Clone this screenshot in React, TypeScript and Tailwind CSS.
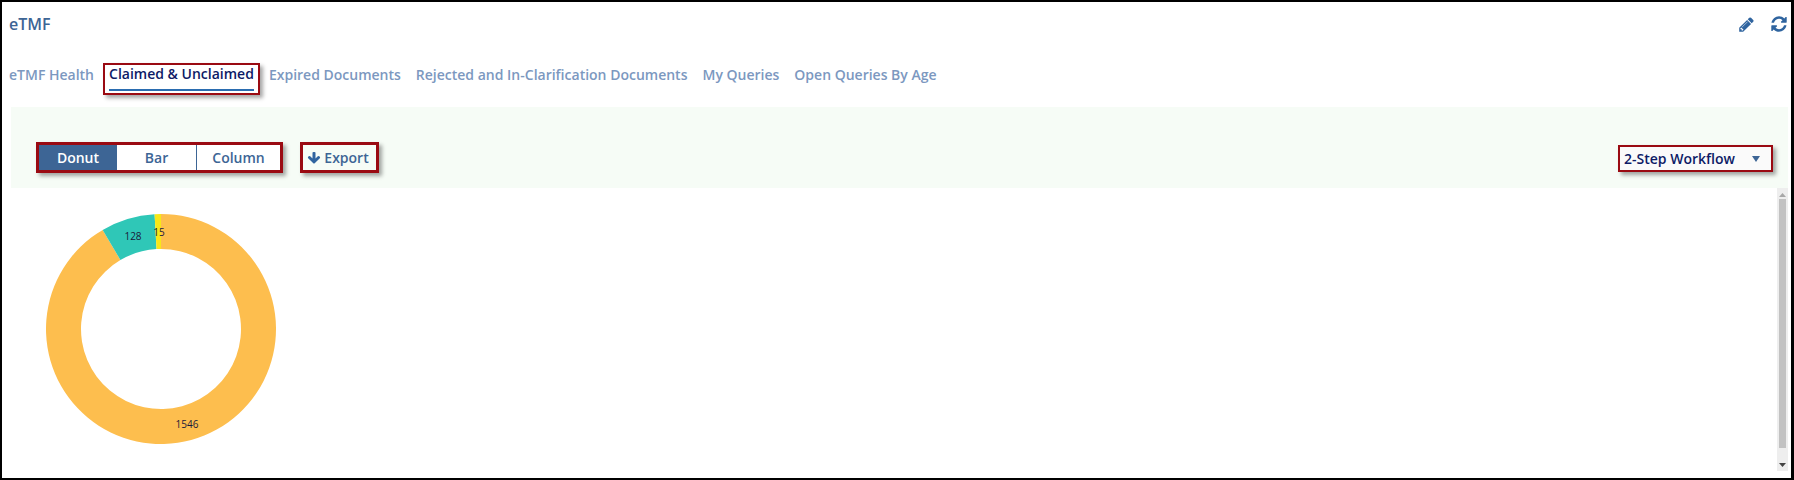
const tabs = [
  "eTMF Health",
  "Claimed & Unclaimed",
  "Expired Documents",
  "Rejected and In-Clarification Documents",
  "My Queries",
  "Open Queries By Age",
];

const slices = [
  { value: 1546, color: "#fdbe4e" },
  { value: 128, color: "#2fc7b7" },
  { value: 15, color: "#f7e718" },
];

// builds an svg ring segment, angles in degrees from 12 o'clock
function ringPath(cx: number, cy: number, r: number, inner: number, from: number, to: number) {
  const pt = (rad: number, deg: number) => {
    const a = (deg * Math.PI) / 180;
    return `${cx + rad * Math.sin(a)} ${cy - rad * Math.cos(a)}`;
  };
  const large = to - from > 180 ? 1 : 0;
  return `M${pt(r, from)} A${r} ${r} 0 ${large} 1 ${pt(r, to)} L${pt(inner, to)} A${inner} ${inner} 0 ${large} 0 ${pt(inner, from)} Z`;
}

function PencilIcon() {
  return (
    <svg width="17" height="17" viewBox="0 0 1792 1792" fill="#2f649f">
      <path d="M491 1536l91-91-235-235-91 91v107h128v128h107zm523-928q0-22-22-22-10 0-17 7l-542 542q-7 7-7 17 0 22 22 22 10 0 17-7l542-542q7-7 7-17zm-54-192l416 416-832 832h-416v-416zm683 96q0 53-37 90l-166 166-416-416 166-165q36-38 90-38 53 0 91 38l235 234q37 39 37 91z" />
    </svg>
  );
}

function RefreshIcon() {
  return (
    <svg width="18" height="18" viewBox="0 0 1792 1792" fill="#2f649f">
      <path d="M1639 1056q0 5-1 7-64 268-268 434.5t-478 166.5q-146 0-282.5-55t-243.5-157l-129 129q-19 19-45 19t-45-19-19-45v-448q0-26 19-45t45-19h448q26 0 45 19t19 45-19 45l-137 137q71 66 161 102t187 36q134 0 250-65t186-179q11-17 53-117 8-23 30-23h192q13 0 22.5 9.5t9.5 22.5zm25-800v448q0 26-19 45t-45 19h-448q-26 0-45-19t-19-45 19-45l138-138q-148-137-349-137-134 0-250 65t-186 179q-11 17-53 117-8 23-30 23h-199q-13 0-22.5-9.5t-9.5-22.5v-7q65-268 270-434.5t480-166.5q146 0 284 55.5t245 156.5l130-129q19-19 45-19t45 19 19 45z" />
    </svg>
  );
}

function ArrowDownIcon() {
  return (
    <svg width="14" height="14" viewBox="0 0 1792 1792" fill="#2f649f">
      <path d="M1675 832q0 53-37 90l-651 652q-39 37-91 37-53 0-90-37l-651-652q-38-36-38-90 0-53 38-91l74-75q39-37 91-37 53 0 90 37l294 294v-704q0-52 38-90t90-38h128q52 0 90 38t38 90v704l294-294q37-37 90-37 52 0 91 37l75 75q37 39 37 91z" />
    </svg>
  );
}

function Donut() {
  const total = slices.reduce((sum, s) => sum + s.value, 0);
  let angle = 0;
  return (
    <svg width="240" height="240" viewBox="0 0 240 240" className="block">
      {slices.map((s) => {
        const from = angle;
        angle += (s.value / total) * 360;
        return <path key={s.value} d={ringPath(120, 120, 115, 80, from, angle)} fill={s.color} />;
      })}
      <g fontSize="10" fill="#1a1a3a" textAnchor="middle">
        <text x="146" y="219">1546</text>
        <text x="92" y="31">128</text>
        <text x="118" y="27">15</text>
      </g>
    </svg>
  );
}

export default function App() {
  return (
    <div className="w-[1794px] h-[480px] bg-white border-2 border-r-[3px] border-black font-['Open_Sans',sans-serif] flex flex-col overflow-hidden">
      <div className="flex items-center justify-between h-[44px] pl-[7px] pr-[3px]">
        <span className="text-[16px] font-semibold text-[#3d6595]">eTMF</span>
        <div className="flex items-center gap-[15px]">
          <PencilIcon />
          <RefreshIcon />
        </div>
      </div>

      <div className="flex items-start h-[61px] pt-[17px] pl-[7px] gap-[15px]">
        {tabs.map((tab, i) =>
          i === 1 ? (
            <div
              key={tab}
              className="h-[32px] px-[4px] -ml-[6px] -mr-[6px] border-[2px] border-[#9a0a12] shadow-[3px_3px_4px_rgba(0,0,0,0.35)] text-[14px] font-semibold text-[#0d1a66]"
            >
              <div className="border-b-[2px] border-[#2a6cb0] h-[26px] leading-[18px]">{tab}</div>
            </div>
          ) : (
            <span key={tab} className="mt-[2px] text-[14px] leading-[20px] font-semibold text-[#7c98bf]">
              {tab}
            </span>
          ),
        )}
      </div>

      <div className="flex items-start justify-between h-[81px] ml-[9px] mr-[3px] bg-[#f6fcf6] pt-[35px] pl-[25px] pr-[15px]">
        <div className="flex items-center gap-[17px]">
          <div className="flex h-[31px] w-[247px] border-[3px] border-[#9a0a12] bg-white shadow-[3px_3px_4px_rgba(0,0,0,0.35)] text-[14px] font-semibold text-[#3d6595]">
            <div className="w-[78px] flex items-center justify-center bg-[#3d6595] text-white">Donut</div>
            <div className="w-[80px] flex items-center justify-center border-r border-[#3d6595]">Bar</div>
            <div className="flex-1 flex items-center justify-center">Column</div>
          </div>
          <div className="flex items-center justify-center gap-[3px] h-[31px] w-[79px] pr-[3px] border-[3px] border-[#9a0a12] shadow-[3px_3px_4px_rgba(0,0,0,0.35)] text-[14px] font-semibold text-[#3d6595]">
            <ArrowDownIcon />
            Export
          </div>
        </div>
        <div className="flex items-center justify-between h-[27px] w-[155px] pl-[4px] pr-[11px] mt-[3px] border-[2px] border-[#9a0a12] bg-[#fafafa] shadow-[3px_3px_4px_rgba(0,0,0,0.35)] text-[14px] font-semibold text-[#0d1a66]">
          2-Step Workflow
          <svg width="8" height="6" viewBox="0 0 8 6">
            <path d="M0 0H8L4 6Z" fill="#3d6595" />
          </svg>
        </div>
      </div>

      <div className="flex flex-1 mr-[3px]">
        <div className="flex-1 pl-[39px] pt-[21px]">
          <Donut />
        </div>
        <div className="w-[11px] h-[283px] bg-[#eeeeee] flex flex-col items-center pt-[5px] pb-[4px]">
          <svg width="7" height="4" viewBox="0 0 7 4" className="shrink-0">
            <path d="M0 4H7L3.5 0Z" fill="#a8a8a8" />
          </svg>
          <div className="w-[7px] flex-1 mt-[2px] mb-[15px] bg-[#c2c2c2]" />
          <svg width="7" height="4" viewBox="0 0 7 4" className="shrink-0">
            <path d="M0 0H7L3.5 4Z" fill="#444444" />
          </svg>
        </div>
      </div>
    </div>
  );
}
